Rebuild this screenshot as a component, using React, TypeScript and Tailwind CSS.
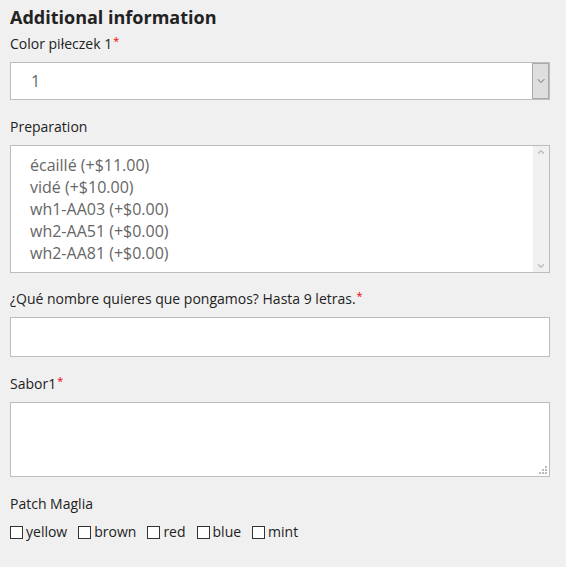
import { ChevronDown, ChevronUp } from "lucide-react";

const Req = () => <sup className="text-[11px] text-[#e00] ml-[1px] relative top-[-4px]">*</sup>;

const options = [
  "écaillé (+$11.00)",
  "vidé (+$10.00)",
  "wh1-AA03 (+$0.00)",
  "wh2-AA51 (+$0.00)",
  "wh2-AA81 (+$0.00)",
];

const patches = ["yellow", "brown", "red", "blue", "mint"];

export default function App() {
  return (
    <div className="min-h-[567px] w-full bg-[#f0f0f0] px-[10px] pt-[4px] text-[#222] font-['Open_Sans',sans-serif]">
      <h2 className="text-[18px] font-bold leading-[26px] text-[#222]">Additional information</h2>

      <div className="mt-[4px] text-[14px] leading-[20px]">
        Color piłeczek 1<Req />
      </div>
      <div className="mt-[8px] flex h-[38px] w-[540px] items-stretch border border-[#bdbdbd] bg-white">
        <div className="flex flex-1 items-center pl-[20px] text-[16px] text-[#666]">1</div>
        <div className="flex w-[17px] items-center justify-center border border-[#aaa] bg-[#dedede]">
          <ChevronDown className="h-[12px] w-[12px] text-[#444]" strokeWidth={1.5} />
        </div>
      </div>

      <div className="mt-[17px] text-[14px] leading-[20px]">Preparation</div>
      <div className="mt-[8px] flex h-[128px] w-[540px] border border-[#bdbdbd] bg-white">
        <div className="flex-1 pl-[19px] pt-[8px] text-[16px] leading-[22px] text-[#666]">
          {options.map((o) => (
            <div key={o}>{o}</div>
          ))}
        </div>
        <div className="flex w-[16px] flex-col items-center justify-between bg-[#f0f0f0] py-[1px]">
          <ChevronUp className="h-[10px] w-[10px] text-[#bbb]" strokeWidth={3} />
          <ChevronDown className="h-[10px] w-[10px] text-[#bbb]" strokeWidth={3} />
        </div>
      </div>

      <div className="mt-[16px] text-[14px] leading-[20px]">
        ¿Qué nombre quieres que pongamos? Hasta 9 letras.<Req />
      </div>
      <div className="mt-[8px] h-[40px] w-[540px] border border-[#bdbdbd] bg-white" />

      <div className="mt-[17px] text-[14px] leading-[20px]">
        Sabor1<Req />
      </div>
      <div className="relative mt-[8px] h-[75px] w-[540px] border border-[#bdbdbd] bg-white">
        <svg className="absolute bottom-[2px] right-[2px]" width="8" height="8" viewBox="0 0 8 8">
          <rect x="6" y="0" width="2" height="2" fill="#bbb" />
          <rect x="3" y="3" width="2" height="2" fill="#bbb" />
          <rect x="6" y="3" width="2" height="2" fill="#bbb" />
          <rect x="0" y="6" width="2" height="2" fill="#bbb" />
          <rect x="3" y="6" width="2" height="2" fill="#bbb" />
          <rect x="6" y="6" width="2" height="2" fill="#bbb" />
        </svg>
      </div>

      <div className="mt-[17px] text-[14px] leading-[20px]">Patch Maglia</div>
      <div className="mt-[8px] flex items-center gap-[11px] text-[14px] leading-[20px]">
        {patches.map((p) => (
          <label key={p} className="flex items-center">
            <span className="h-[13px] w-[13px] border border-[#333] bg-white" />
            <span className="ml-[3px]">{p}</span>
          </label>
        ))}
      </div>
    </div>
  );
}
